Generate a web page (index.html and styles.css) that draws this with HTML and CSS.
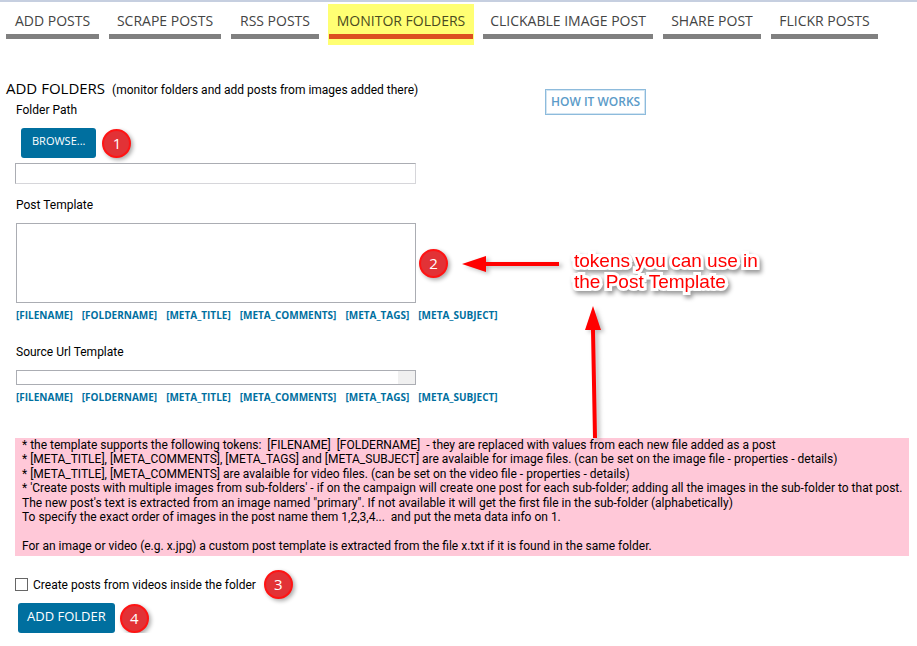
FILE: index.html
```
<!DOCTYPE html>
<html lang="en">
<head>
<meta charset="utf-8">
<title>Monitor Folders</title>
<link rel="stylesheet" href="styles.css">
</head>
<body>
<nav class="tabs">
  <a class="tab" href="#add">ADD POSTS</a>
  <a class="tab" href="#scrape">SCRAPE POSTS</a>
  <a class="tab" href="#rss">RSS POSTS</a>
  <a class="tab tab-active" href="#monitor" aria-current="page">MONITOR FOLDERS</a>
  <a class="tab" href="#clickable">CLICKABLE IMAGE POST</a>
  <a class="tab" href="#share">SHARE POST</a>
  <a class="tab" href="#flickr">FLICKR POSTS</a>
</nav>
<main class="page">
  <header class="heading">
    <h1 class="title">ADD FOLDERS</h1>
    <p class="subtitle">(monitor folders and add posts from images added there)</p>
  </header>
  <a class="how" href="#how">HOW IT WORKS</a>
  <form class="form">
    <label class="label" for="path">Folder Path</label>
    <div class="row row-browse">
      <button class="button button-small" type="button">BROWSE...</button>
      <span class="badge">1</span>
    </div>
    <input class="field field-path" id="path" type="text">
    <label class="label label-post" for="post">Post Template</label>
    <div class="row row-post">
      <textarea class="field field-post" id="post"></textarea>
      <span class="badge">2</span>
    </div>
    <div class="tokens">
      <a href="#t">[FILENAME]</a>
      <a href="#t">[FOLDERNAME]</a>
      <a href="#t">[META_TITLE]</a>
      <a href="#t">[META_COMMENTS]</a>
      <a href="#t">[META_TAGS]</a>
      <a href="#t">[META_SUBJECT]</a>
    </div>
    <label class="label label-source" for="source">Source Url Template</label>
    <textarea class="field field-source" id="source"></textarea>
    <div class="tokens">
      <a href="#t">[FILENAME]</a>
      <a href="#t">[FOLDERNAME]</a>
      <a href="#t">[META_TITLE]</a>
      <a href="#t">[META_COMMENTS]</a>
      <a href="#t">[META_TAGS]</a>
      <a href="#t">[META_SUBJECT]</a>
    </div>
    <div class="help">* the template supports the following tokens:&nbsp; [FILENAME]&nbsp; [FOLDERNAME]&nbsp; - they are replaced with values from each new file added as a post<br>
      * [META_TITLE], [META_COMMENTS], [META_TAGS] and [META_SUBJECT] are avalaible for image files. (can be set on the image file - properties - details)<br>
      * [META_TITLE], [META_COMMENTS] are avalaible for video files. (can be set on the video file - properties - details)<br>
      * 'Create posts with multiple images from sub-folders' - if on the campaign will create one post for each sub-folder; adding all the images in the sub-folder to that post.<br>
      The new post's text is extracted from an image named "primary". If not available it will get the first file in the sub-folder (alphabetically)<br>
      To specify the exact order of images in the post name them 1,2,3,4...&nbsp; and put the meta data info on 1.<br>
      <br>
      For an image or video (e.g. x.jpg) a custom post template is extracted from the file x.txt if it is found in the same folder.</div>
    <div class="row row-check">
      <input class="check" id="videos" type="checkbox">
      <label class="check-label" for="videos">Create posts from videos inside the folder</label>
      <span class="badge">3</span>
    </div>
    <div class="row row-submit">
      <button class="button" type="submit">ADD FOLDER</button>
      <span class="badge">4</span>
    </div>
  </form>
</main>
<p class="note">tokens you can use in<br>the Post Template</p>
<svg class="arrow arrow-left" width="98" height="18" viewBox="0 0 98 18" aria-hidden="true"><path d="M0 9 24 1V7H97V11H24V17Z" fill="#f00"/></svg>
<svg class="arrow arrow-up" width="18" height="134" viewBox="0 0 18 134" aria-hidden="true"><path d="M8 0 16 24H10L12 132H8L6 24H0Z" fill="#f00"/></svg>
</body>
</html>
```
FILE: styles.css
```
* { box-sizing: border-box; }
body {
  margin: 0;
  position: relative;
  background: #fff;
  border-top: 2px solid #c6cfe0;
  color: #000;
  font: 12px/16px Roboto, "Open Sans", sans-serif;
}
a { text-decoration: none; }
.tabs {
  display: grid;
  grid-template-columns: 95px 114px 90px 146px 172px 100px 109px;
  gap: 8px;
  padding: 2px 5px 0;
}
.tab {
  padding: 6px 1px;
  color: #444;
  font: 14px/22px "Open Sans", sans-serif;
  text-align: center;
  white-space: nowrap;
}
.tab::after {
  content: "";
  display: block;
  height: 5px;
  margin-top: 2px;
  background: #808080;
}
.tab-active { background: #ffff73; color: #4a4a20; }
.tab-active::after { background: #dc5020; }
.page { position: relative; padding: 31px 8px 0 6px; }
.heading { display: flex; align-items: baseline; gap: 7px; }
.title { margin: 0; font: 15px/24px "Open Sans", sans-serif; }
.subtitle { margin: 0; }
.how {
  position: absolute;
  top: 44px;
  left: 545px;
  padding: 3px 5px;
  border: 1px solid #8dbbdc;
  color: #5b9bc8;
  font: 600 12px/18px "Open Sans", sans-serif;
  outline: 1px solid #d3e5f2;
  outline-offset: -2px;
}
.form { display: flex; flex-direction: column; padding: 2px 0 0 9px; }
.label { padding-left: 1px; }
.row { display: flex; align-items: center; }
.badge {
  width: 29px;
  height: 29px;
  border: 2px solid #ff1414;
  border-radius: 50%;
  background: #e23236;
  box-shadow: 2px 2px 4px #0005;
  color: #fff;
  font: 15px/24px "Open Sans", sans-serif;
  text-align: center;
}
.button {
  height: 30px;
  padding: 0 9px 4px;
  border: 0;
  border-radius: 3px;
  background: #006f9f;
  color: #fff;
  font: 13px/18px "Open Sans", sans-serif;
}
.button-small { padding: 0 11px 4px; font-size: 11px; }
.field {
  width: 400px;
  margin: 0 0 0 1px;
  border: 1px solid #abadb3;
  border-radius: 0;
  background: #fff;
  resize: none;
}
.row-browse { gap: 6px; margin: 10px 0 5px 6px; }
.field-path {
  width: 401px;
  height: 21px;
  margin: 0;
  border-color: #abadb3 #d6d6da #d6d6da #abadb3;
}
.label-post { margin: 13px 0 10px; }
.row-post { gap: 3px; }
.field-post { height: 80px; }
.tokens {
  display: flex;
  gap: 9px;
  padding: 4px 0 0 1px;
  font: 700 10px/16px "Open Sans", sans-serif;
}
.tokens a { color: #006f9f; }
.label-source { margin: 21px 0 10px; }
.field-source {
  height: 15px;
  background: linear-gradient(#f0f0f0, #f0f0f0) right / 17px 100% no-repeat #fff;
}
.help {
  margin-top: 33px;
  padding: 0 0 3px 7px;
  background: #ffc8d8;
  line-height: 1.2;
  white-space: nowrap;
}
.row-check { margin-top: 14px; }
.check {
  appearance: none;
  width: 13px;
  height: 13px;
  margin: 0 5px 0 0;
  border: 1px solid #666;
  background: #fff;
}
.check:checked { background: #006f9f; }
.check-label { margin-right: 8px; }
.row-submit { gap: 5px; margin: 4px 0 0 3px; }
.note {
  position: absolute;
  top: 248px;
  left: 574px;
  margin: 0;
  color: #f00;
  font: 19px/21px "Liberation Sans", sans-serif;
  -webkit-text-stroke: 6px #fff;
  paint-order: stroke fill;
  filter: drop-shadow(2px 3px 2px #0006);
}
.arrow { position: absolute; filter: drop-shadow(3px 2px 2px #0004); }
.arrow-left { top: 253px; left: 462px; }
.arrow-up { top: 304px; left: 585px; }
```
